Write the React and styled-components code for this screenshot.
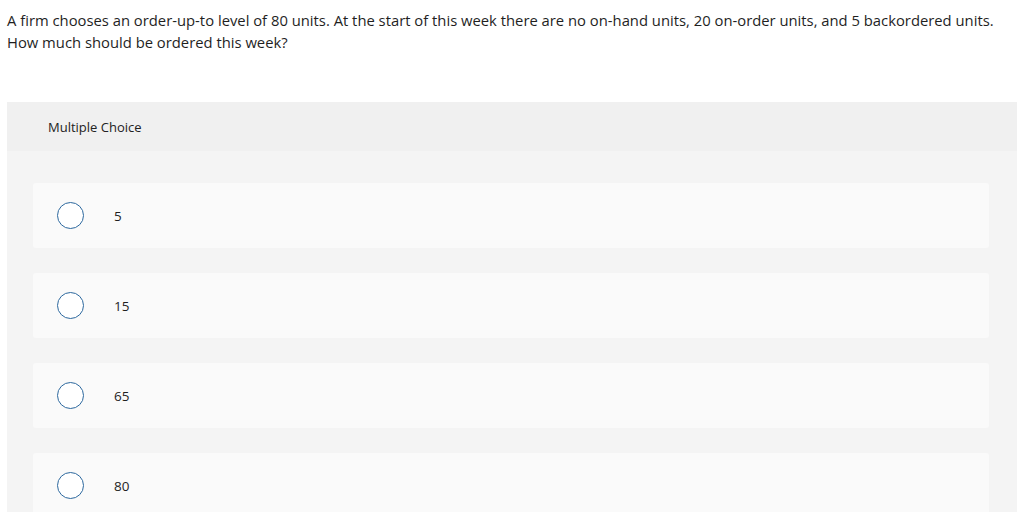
import React from "react"
import styled, { createGlobalStyle } from "styled-components"

const GlobalStyle = createGlobalStyle`
  body {
    margin: 0;
    background: #fff;
    font-family: "Open Sans", "Noto Sans", sans-serif;
    color: #1a1a1a;
  }
`

const Page = styled.div`
  padding: 9px 7px 0 7px;
`

const Question = styled.p`
  margin: 0;
  font-size: 14.8px;
  line-height: 22px;
  color: #1f1f1f;
  max-width: 1010px;
`

const Panel = styled.section`
  margin-top: 49px;
  width: 1010px;
  background: #f4f4f4;
`

const PanelHeader = styled.div`
  height: 49px;
  background: #f0f0f0;
  display: flex;
  align-items: center;
  padding-left: 41px;
  font-size: 13px;
  color: #222;
`

const Choices = styled.div`
  display: flex;
  flex-direction: column;
  gap: 25px;
  padding: 32px 28px 0 26px;
`

const Choice = styled.label`
  height: 65px;
  background: #fafafa;
  border-radius: 3px;
  display: flex;
  align-items: center;
  padding-left: 24px;
  cursor: pointer;
`

const Radio = styled.span`
  width: 25px;
  height: 25px;
  border: 1.5px solid #2c689e;
  border-radius: 50%;
  background: #fff;
  flex-shrink: 0;
`

const ChoiceText = styled.span`
  margin-left: 30px;
  font-size: 13.5px;
  color: #1f1f1f;
`

const options = ["5", "15", "65", "80"]

export default function App() {
  return (
    <Page>
      <GlobalStyle />
      <Question>
        A firm chooses an order-up-to level of 80 units. At the start of this
        week there are no on-hand units, 20 on-order units, and 5 backordered
        units.
        <br />
        How much should be ordered this week?
      </Question>
      <Panel>
        <PanelHeader>Multiple Choice</PanelHeader>
        <Choices>
          {options.map((o) => (
            <Choice key={o}>
              <Radio />
              <ChoiceText>{o}</ChoiceText>
            </Choice>
          ))}
        </Choices>
      </Panel>
    </Page>
  )
}
